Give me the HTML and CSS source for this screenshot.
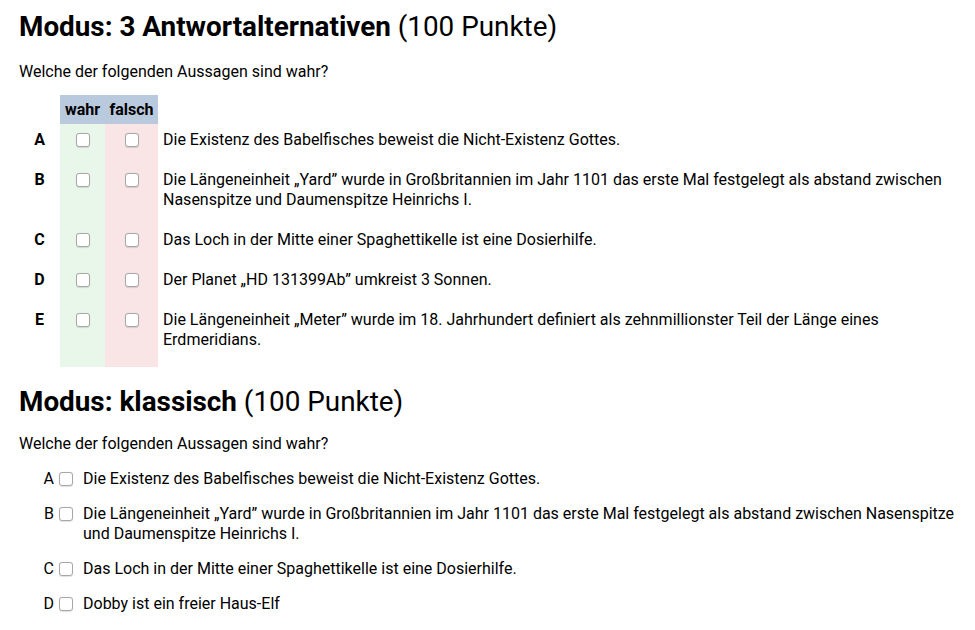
FILE: index.html
```html
<!DOCTYPE html>
<html lang="de">
<head>
<meta charset="utf-8">
<title>Modus</title>
<link rel="stylesheet" href="styles.css">
</head>
<body>
<main class="page">
  <section class="quiz">
    <h1 class="mode-title"><strong>Modus: 3 Antwortalternativen</strong> (100 Punkte)</h1>
    <p class="question">Welche der folgenden Aussagen sind wahr?</p>
    <table class="tf-table">
      <thead>
        <tr>
          <th class="col-letter"></th>
          <th class="col-true">wahr</th>
          <th class="col-false">falsch</th>
          <th class="col-text"></th>
        </tr>
      </thead>
      <tbody>
        <tr>
          <td class="cell-letter">A</td>
          <td class="cell-true"><input type="checkbox" class="box"></td>
          <td class="cell-false"><input type="checkbox" class="box"></td>
          <td class="cell-text">Die Existenz des Babelfisches beweist die Nicht-Existenz Gottes.</td>
        </tr>
        <tr>
          <td class="cell-letter">B</td>
          <td class="cell-true"><input type="checkbox" class="box"></td>
          <td class="cell-false"><input type="checkbox" class="box"></td>
          <td class="cell-text">Die Längeneinheit „Yard” wurde in Großbritannien im Jahr 1101 das erste Mal festgelegt als abstand zwischen Nasenspitze und Daumenspitze Heinrichs I.</td>
        </tr>
        <tr>
          <td class="cell-letter">C</td>
          <td class="cell-true"><input type="checkbox" class="box"></td>
          <td class="cell-false"><input type="checkbox" class="box"></td>
          <td class="cell-text">Das Loch in der Mitte einer Spaghettikelle ist eine Dosierhilfe.</td>
        </tr>
        <tr>
          <td class="cell-letter">D</td>
          <td class="cell-true"><input type="checkbox" class="box"></td>
          <td class="cell-false"><input type="checkbox" class="box"></td>
          <td class="cell-text">Der Planet „HD 131399Ab” umkreist 3 Sonnen.</td>
        </tr>
        <tr class="last-row">
          <td class="cell-letter">E</td>
          <td class="cell-true"><input type="checkbox" class="box"></td>
          <td class="cell-false"><input type="checkbox" class="box"></td>
          <td class="cell-text">Die Längeneinheit „Meter” wurde im 18. Jahrhundert definiert als zehnmillionster Teil der Länge eines Erdmeridians.</td>
        </tr>
      </tbody>
    </table>
  </section>

  <section class="quiz">
    <h1 class="mode-title second"><strong>Modus: klassisch</strong> (100 Punkte)</h1>
    <p class="question">Welche der folgenden Aussagen sind wahr?</p>
    <ul class="choice-list">
      <li class="choice">
        <span class="choice-letter">A</span>
        <input type="checkbox" class="box choice-box">
        <span class="choice-text">Die Existenz des Babelfisches beweist die Nicht-Existenz Gottes.</span>
      </li>
      <li class="choice">
        <span class="choice-letter">B</span>
        <input type="checkbox" class="box choice-box">
        <span class="choice-text">Die Längeneinheit „Yard” wurde in Großbritannien im Jahr 1101 das erste Mal festgelegt als abstand zwischen Nasenspitze und Daumenspitze Heinrichs I.</span>
      </li>
      <li class="choice">
        <span class="choice-letter">C</span>
        <input type="checkbox" class="box choice-box">
        <span class="choice-text">Das Loch in der Mitte einer Spaghettikelle ist eine Dosierhilfe.</span>
      </li>
      <li class="choice">
        <span class="choice-letter">D</span>
        <input type="checkbox" class="box choice-box">
        <span class="choice-text">Dobby ist ein freier Haus-Elf</span>
      </li>
    </ul>
  </section>
</main>
</body>
</html>
```

FILE: styles.css
```css
html, body {
  margin: 0;
  padding: 0;
  background: #ffffff;
}

body {
  font-family: Roboto, "Liberation Sans", Arial, sans-serif;
  font-size: 16px;
  line-height: 20px;
  color: #000000;
}

.page {
  padding: 10px 20px 0 19px;
}

.mode-title {
  margin: 0;
  font-size: 27.85px;
  line-height: 34px;
  font-weight: 400;
  color: #000000;
}

.mode-title strong {
  font-weight: 700;
}

.mode-title.second {
  margin-top: 18px;
}

.question {
  margin: 18px 0 0 0;
}

.mode-title.second + .question {
  margin-top: 15px;
}

.box {
  appearance: none;
  -webkit-appearance: none;
  box-sizing: border-box;
  width: 14px;
  height: 14px;
  border: 1px solid #a7a7a7;
  border-radius: 3px;
  background: #ffffff;
  box-shadow: 0 0.5px 1px rgba(0, 0, 0, 0.12);
}

.tf-table {
  margin-top: 13px;
  width: 100%;
  border-collapse: collapse;
  border-spacing: 0;
}

.tf-table th {
  padding: 5px 0;
  font-weight: 700;
  line-height: 19px;
  text-align: center;
}

.tf-table .col-letter {
  width: 41px;
  padding: 0;
}

.tf-table .col-true {
  width: 45px;
  background: #b9c9de;
}

.tf-table .col-false {
  width: 53px;
  background: #b9c9de;
}

.tf-table td {
  padding: 6px 0 14px 0;
  vertical-align: top;
}

.tf-table .last-row td {
  padding-bottom: 17px;
}

.cell-letter {
  font-weight: 700;
  text-align: center;
}

.cell-true {
  background: #e9f7ea;
}

.cell-false {
  background: #f9e5e5;
}

.cell-true .box,
.cell-false .box {
  display: block;
  margin: 3px auto 0 auto;
}

.tf-table .cell-text {
  padding-left: 5px;
}

.choice-list {
  list-style: none;
  margin: 15px 0 0 0;
  padding: 0;
  display: flex;
  flex-direction: column;
  gap: 15px;
}

.choice {
  display: flex;
  align-items: flex-start;
}

.choice-letter {
  width: 35px;
  flex: 0 0 35px;
  text-align: right;
}

.choice-box {
  flex: 0 0 14px;
  margin: 3px 10px 0 5px;
}

.choice-text {
  flex: 1 1 auto;
}
```
